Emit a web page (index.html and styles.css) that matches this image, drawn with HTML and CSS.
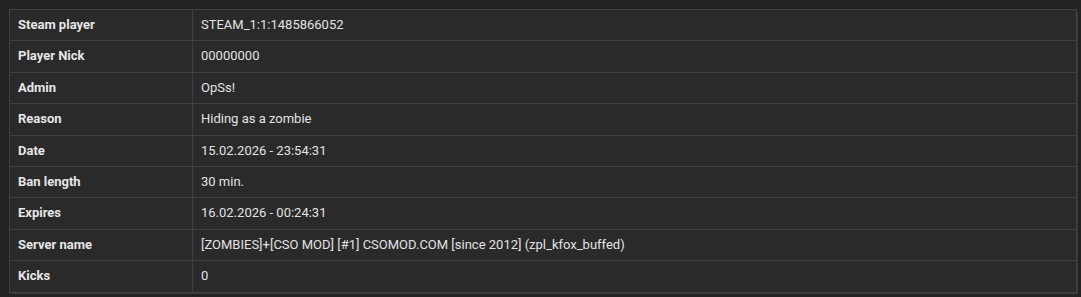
FILE: index.html
```html
<!DOCTYPE html>
<html lang="en">
<head>
<meta charset="utf-8">
<title>Ban details</title>
<link rel="stylesheet" href="styles.css">
</head>
<body>
<div class="wrap">
<table class="info">
<tbody>
<tr><th>Steam player</th><td>STEAM_1:1:1485866052</td></tr>
<tr><th>Player Nick</th><td>00000000</td></tr>
<tr><th>Admin</th><td>OpSs!</td></tr>
<tr><th>Reason</th><td>Hiding as a zombie</td></tr>
<tr><th>Date</th><td>15.02.2026 - 23:54:31</td></tr>
<tr><th>Ban length</th><td>30 min.</td></tr>
<tr><th>Expires</th><td>16.02.2026 - 00:24:31</td></tr>
<tr><th>Server name</th><td>[ZOMBIES]+[CSO MOD] [#1] CSOMOD.COM [since 2012] (zpl_kfox_buffed)</td></tr>
<tr><th>Kicks</th><td>0</td></tr>
</tbody>
</table>
</div>
</body>
</html>
```
FILE: styles.css
```css
html, body {
  margin: 0;
  background: #232323;
}
.wrap {
  padding: 9px 4px 4px 9px;
}
.info {
  width: 1068px;
  border-collapse: collapse;
  background: #2a2a2a;
  font-family: Roboto, "Liberation Sans", sans-serif;
  font-size: 13px;
  color: #e2e2e2;
  border: 1px solid #444;
  box-shadow: 2px 2px 0 -1px #3a3a3a;
}
.info th,
.info td {
  border: 1px solid #404040;
  padding: 6px 8px;
  line-height: 18.4px;
  text-align: left;
  vertical-align: middle;
}
.info th {
  width: 166px;
  font-weight: 700;
  color: #e6e6e6;
}
.info td {
  font-weight: 400;
}
```
